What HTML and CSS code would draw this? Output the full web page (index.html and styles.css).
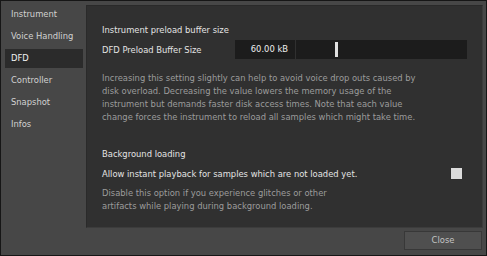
FILE: index.html
```html
<!DOCTYPE html>
<html lang="en">
<head>
    <meta charset="UTF-8">
    <meta name="viewport" content="width=device-width, initial-scale=1.0">
    <title>Instrument Options</title>
    <link rel="stylesheet" href="styles.css">
</head>
<body>
    <div id="dialog">
        <div class="dialog-body">
            <ul class="sidebar">
                <li class="tab">Instrument</li>
                <li class="tab">Voice Handling</li>
                <li class="tab active">DFD</li>
                <li class="tab">Controller</li>
                <li class="tab">Snapshot</li>
                <li class="tab">Infos</li>
            </ul>
            <div class="panel">
                <div class="section-title">Instrument preload buffer size</div>
                <div class="row">
                    <span class="label">DFD Preload Buffer Size</span>
                    <span class="value-box">60.00 kB</span>
                    <span class="slider"><span class="handle"></span></span>
                </div>
                <p class="note">Increasing this setting slightly can help to avoid voice drop outs caused by<br>disk overload. Decreasing the value lowers the memory usage of the<br>instrument but demands faster disk access times. Note that each value<br>change forces the instrument to reload all samples which might take time.</p>

                <div class="section-title second">Background loading</div>
                <div class="row check-row">
                    <span class="label">Allow instant playback for samples which are not loaded yet.</span>
                    <span class="checkbox"></span>
                </div>
                <p class="note small-gap">Disable this option if you experience glitches or other<br>artifacts while playing during background loading.</p>
            </div>
        </div>
        <div class="footer">
            <a href="#" class="button">Close</a>
        </div>
    </div>
</body>
</html>
```
FILE: styles.css
```css
body, html {
    margin: 0;
    padding: 0;
    height: 100%;
    overflow: hidden;
    background-color: #474747;
}
#dialog {
    box-sizing: border-box;
    width: 487px;
    height: 256px;
    border: 1px solid #161616;
    background: #474747;
    display: flex;
    flex-direction: column;
    font-family: "DejaVu Sans", Verdana, sans-serif;
    font-size: 8.4px;
}
.dialog-body {
    display: flex;
    flex: 1;
    padding: 4px 3px 0 4px;
    gap: 3px;
}
.sidebar {
    list-style: none;
    margin: 0;
    padding: 0;
    width: 78px;
    display: flex;
    flex-direction: column;
    gap: 3px;
}
.tab {
    height: 19px;
    line-height: 19px;
    padding-left: 6px;
    color: #d2d2d2;
    white-space: nowrap;
}
.tab.active {
    background: #2b2b2b;
    color: #f2f2f2;
}
.panel {
    flex: 1;
    height: 223px;
    box-sizing: border-box;
    background: #303030;
    border: 1px solid #3c3c3c;
    border-left-color: #2a2a2a;
    border-top-color: #2a2a2a;
    padding: 18px 15px 0 15px;
}
.section-title {
    height: 13px;
    line-height: 13px;
    color: #e4e4e4;
}
.section-title.second {
    margin-top: 24px;
}
.row {
    display: flex;
    align-items: center;
    height: 19px;
    margin-top: 3px;
    color: #e4e4e4;
}
.label {
    width: 133px;
    white-space: nowrap;
}
.value-box {
    box-sizing: border-box;
    width: 60px;
    height: 19px;
    line-height: 19px;
    background: #1c1c1c;
    text-align: right;
    padding-right: 7px;
    color: #eeeeee;
}
.slider {
    position: relative;
    flex: 1;
    height: 19px;
    margin-left: 1px;
    background: #1c1c1c;
}
.slider .handle {
    position: absolute;
    left: 39px;
    top: 2px;
    width: 3px;
    height: 15px;
    background: #e0e0e0;
}
.check-row {
    justify-content: space-between;
}
.check-row .label {
    width: auto;
}
.checkbox {
    width: 11px;
    height: 11px;
    margin-right: 5px;
    background: #dcdcdc;
}
.note {
    margin: 13px 0 0 0;
    line-height: 13px;
    color: #9c9c9c;
    white-space: nowrap;
}
.note.small-gap {
    margin-top: 4px;
}
.footer {
    display: flex;
    justify-content: flex-end;
    padding: 3px 4px 5px 0;
}
.button {
    box-sizing: border-box;
    width: 78px;
    height: 19px;
    line-height: 17px;
    text-align: center;
    background: #4f4f4f;
    border: 1px solid #383838;
    color: #c4c4c4;
    text-decoration: none;
}
```
